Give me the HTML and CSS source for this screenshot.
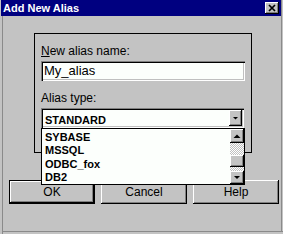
FILE: index.html
```html
<!DOCTYPE html>
<html>
<head>
<meta charset="utf-8">
<link rel="stylesheet" href="styles.css">
</head>
<body>
<div class="window">
  <div class="titlebar">
    <span class="title">Add New Alias</span>
    <span class="close"><svg width="14" height="12" viewBox="0 0 14 12"><path d="M4 3 L10 9 M10 3 L4 9" stroke="#000" stroke-width="1.7" fill="none"/></svg></span>
  </div>
  <div class="group">
    <div class="label label-name"><u>N</u>ew alias name:</div>
    <div class="input">My_alias</div>
    <div class="label label-type">Alias type:</div>
    <div class="combo">
      <span class="combo-text">STANDARD</span>
      <span class="combo-btn"><svg width="13" height="16" viewBox="0 0 13 16"><path d="M4 7 H9 L6.5 9.5 Z" fill="#000"/></svg></span>
      <div class="dropdown">
        <ul class="items">
          <li>SYBASE</li>
          <li>MSSQL</li>
          <li>ODBC_fox</li>
          <li>DB2</li>
        </ul>
        <div class="scrollbar">
          <span class="sb-btn"><svg width="14" height="14" viewBox="0 0 14 14"><path d="M3.5 9 H10.5 L7 5.5 Z" fill="#000"/></svg></span>
          <span class="sb-track sb-track-top"></span>
          <span class="sb-thumb"></span>
          <span class="sb-track sb-track-bottom"></span>
          <span class="sb-btn sb-btn-down"><svg width="14" height="13" viewBox="0 0 14 13"><path d="M4 5 H10 L7 8 Z" fill="#000"/></svg></span>
        </div>
      </div>
    </div>
  </div>
  <div class="buttons">
    <div class="btn btn-default">OK</div>
    <div class="btn">Cancel</div>
    <div class="btn">Help</div>
  </div>
</div>
</body>
</html>
```
FILE: styles.css
```css
html, body {
  margin: 0;
  padding: 0;
  background: #c3c3c3;
}
.window {
  width: 283px;
  height: 234px;
  box-sizing: border-box;
  padding: 0 2px 0 1px;
  background: #c3c3c3;
  font-family: "Liberation Sans", Arial, sans-serif;
  color: #000;
  overflow: hidden;
  box-shadow: inset 2px 0 0 #c3c3c3, inset 3px 0 0 #8a8a8a,
              inset 0 -2px 0 #c3c3c3, inset 0 -3px 0 #8a8a8a,
              inset -1px 0 0 #c3c3c3, inset -2px 0 0 #8a8a8a;
}
.titlebar {
  height: 16px;
  background: #000080;
  display: flex;
  justify-content: space-between;
  align-items: flex-start;
}
.title {
  color: #fff;
  font-weight: bold;
  font-size: 11px;
  line-height: 16px;
  padding-left: 2px;
}
.close {
  width: 14px;
  height: 12px;
  margin: 2px 2px 0 0;
  background: #c3c3c3;
  box-shadow: inset -1px -1px 0 #000, inset 1px 1px 0 #fff, inset -2px -2px 0 #808080;
  display: block;
}
.close svg { display: block; }
.group {
  margin: 17px 0 0 33px;
  width: 218px;
  height: 120px;
  box-sizing: border-box;
  border: 1px solid #000;
  padding: 10px 0 0 6px;
}
.label {
  font-size: 12px;
  line-height: 14px;
}
.label u { text-decoration: underline; text-underline-offset: 1px; }
.input {
  margin-top: 3px;
  width: 204px;
  height: 20px;
  box-sizing: border-box;
  background: #fcfffc;
  box-shadow: inset 1px 1px 0 #808080, inset 2px 2px 0 #000, inset -1px -1px 0 #fff, inset -2px -2px 0 #c0c0c0;
  font-size: 13px;
  line-height: 20px;
  padding-left: 3px;
}
.label-type { margin-top: 10px; }
.combo {
  position: relative;
  margin-top: 3px;
  width: 203px;
  height: 20px;
  box-sizing: border-box;
  background: #fcfffc;
  box-shadow: inset 1px 1px 0 #808080, inset 2px 2px 0 #000, inset -1px -1px 0 #fff, inset -2px -2px 0 #c0c0c0;
  display: flex;
  align-items: flex-start;
  justify-content: space-between;
  padding: 2px 2px 2px 4px;
}
.combo-text {
  font-size: 11px;
  font-weight: bold;
  line-height: 18px;
  margin-top: 1px;
}
.combo-btn {
  width: 13px;
  height: 16px;
  background: #c3c3c3;
  box-shadow: inset -1px -1px 0 #000, inset 1px 1px 0 #fff, inset -2px -2px 0 #808080;
  display: block;
}
.combo-btn svg, .sb-btn svg { display: block; }
.dropdown {
  position: absolute;
  top: 20px;
  left: 0;
  width: 204px;
  height: 57px;
  box-sizing: border-box;
  border: 1px solid #000;
  background: #fcfffc;
  display: flex;
  z-index: 2;
}
.items {
  list-style: none;
  margin: 0;
  padding: 2px 0 0 3px;
  flex: 1;
  overflow: hidden;
  font-size: 11px;
  font-weight: bold;
  line-height: 13.3px;
}
.scrollbar {
  width: 14px;
  display: flex;
  flex-direction: column;
}
.sb-btn {
  height: 14px;
  background: #c3c3c3;
  box-shadow: inset -1px -1px 0 #000, inset 1px 1px 0 #fff, inset -2px -2px 0 #808080;
  display: block;
}
.sb-btn-down { height: 13px; }
.sb-track {
  display: block;
  background: repeating-conic-gradient(#fff 0 25%, #c0c0c0 0 50%) 0 0 / 2px 2px;
}
.sb-track-top { height: 12px; }
.sb-track-bottom { height: 4px; }
.sb-thumb {
  display: block;
  height: 12px;
  background: #c3c3c3;
  box-shadow: inset -1px -1px 0 #000, inset 1px 1px 0 #fff, inset -2px -2px 0 #808080;
}
.buttons {
  display: flex;
  gap: 6px;
  margin: 27px 0 0 8px;
}
.btn {
  width: 86px;
  height: 24px;
  box-sizing: border-box;
  background: #c3c3c3;
  box-shadow: inset -1px -1px 0 #000, inset 1px 1px 0 #fff, inset -2px -2px 0 #808080;
  font-size: 12px;
  line-height: 24px;
  text-align: center;
}
.btn-default {
  border: 1px solid #000;
  line-height: 22px;
}
```
